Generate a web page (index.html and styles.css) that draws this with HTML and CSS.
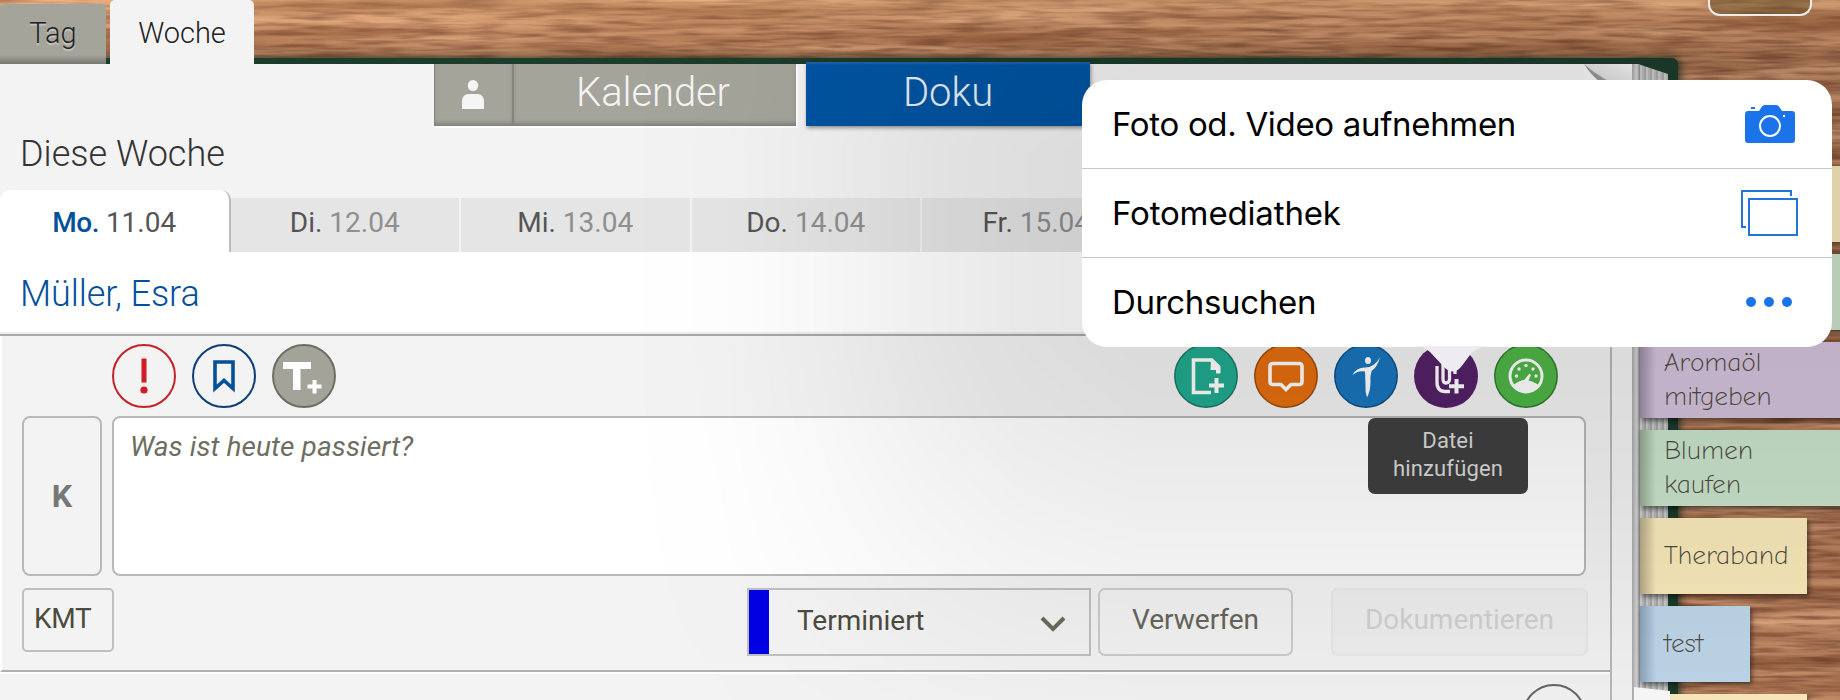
FILE: index.html
```html
<!DOCTYPE html>
<html lang="de">
<head>
<meta charset="utf-8">
<title>Doku – Diese Woche</title>
<link rel="stylesheet" href="styles.css">
</head>
<body>
<div class="desk">
  <svg class="wood" width="1840" height="700" aria-hidden="true">
    <defs>
      <filter id="grain" x="0" y="0" width="100%" height="100%" color-interpolation-filters="sRGB">
        <feTurbulence type="fractalNoise" baseFrequency="0.0035 0.07" numOctaves="3" seed="11"/>
        <feColorMatrix values="0.5 0 0 0 0.51  0.5 0 0 0 0.29  0.45 0 0 0 0.17  0 0 0 0 1"/>
      </filter>
      <filter id="fibre" x="0" y="0" width="100%" height="100%" color-interpolation-filters="sRGB">
        <feTurbulence type="fractalNoise" baseFrequency="0.02 0.25" numOctaves="2" seed="4"/>
        <feColorMatrix values="0 0 0 0 0.35  0 0 0 0 0.18  0 0 0 0 0.12  1.3 0 0 0 -0.52"/>
      </filter>
      <linearGradient id="shade" x1="0" y1="0" x2="0" y2="1">
        <stop offset="0" stop-color="#ffc88a" stop-opacity=".3"/>
        <stop offset=".035" stop-color="#d99a60" stop-opacity=".15"/>
        <stop offset=".08" stop-color="#5a2e18" stop-opacity=".18"/>
        <stop offset="1" stop-color="#5a2e18" stop-opacity=".08"/>
      </linearGradient>
    </defs>
    <rect width="1840" height="700" filter="url(#grain)"/>
    <rect width="1840" height="700" filter="url(#fibre)"/>
    <rect width="1840" height="700" fill="url(#shade)"/>
  </svg>

  <nav class="modes">
    <a class="mode">Tag</a>
    <a class="mode mode-on">Woche</a>
    <span class="ghost-button"></span>
  </nav>

  <div class="book">
    <main class="page">
      <div class="views">
        <div class="view view-person">
          <svg width="24" height="30" viewBox="0 0 24 30"><ellipse cx="12" cy="5.5" rx="5.2" ry="5.5"/><path d="M1 29V22Q1 14 8 14H16Q23 14 23 22V29Z"/></svg>
        </div>
        <div class="view view-calendar">Kalender</div>
        <div class="view view-doku">Doku</div>
      </div>
      <h1 class="week">Diese Woche</h1>
      <div class="days">
        <div class="day day-on"><b>Mo.</b> 11.04</div>
        <div class="day"><b>Di.</b> 12.04</div>
        <div class="day"><b>Mi.</b> 13.04</div>
        <div class="day"><b>Do.</b> 14.04</div>
        <div class="day"><b>Fr.</b> 15.04</div>
        <div class="day"></div>
        <div class="day"></div>
      </div>
      <h2 class="client">Müller, Esra</h2>
      <section class="editor">
        <div class="tools">
          <svg class="tool" viewBox="0 0 64 64"><circle cx="32" cy="32" r="31" fill="none" stroke="#c8202b" stroke-width="2"/><path d="M29.5 14.500H34.500V38.500H29.500Z" fill="#d41a24"/><circle cx="32" cy="46" r="3.600" fill="#d41a24"/></svg>
          <svg class="tool" viewBox="0 0 64 64"><circle cx="32" cy="32" r="31" fill="none" stroke="#0c3f78" stroke-width="2"/><path d="M23 18H41V44.500L32 36.500L23 44.500Z" fill="none" stroke="#04509c" stroke-width="3.600"/></svg>
          <svg class="tool" viewBox="0 0 64 64"><circle cx="32" cy="32" r="31" fill="#a3a39a" stroke="#6e6e64" stroke-width="2"/><path d="M11 18H39V25H28.500V46H21V25H11ZM40.500 36H44.500V40.500H49.500V44.500H44.500V49.500H40.500V44.500H35.500V40.500H40.500Z" fill="#fff"/></svg>
          <span class="spacer"></span>
          <svg class="tool" viewBox="0 0 64 64"><circle cx="32" cy="32" r="31.200" fill="#22ab90" stroke="#1c7766" stroke-width="1.500"/><path d="M37 48.500H19.500V16H37L44.500 23.500V29" fill="none" stroke="#fff" stroke-width="3.600"/><path d="M37 14.200H38.500L46.300 22V29.500H42V26H36.500Z" fill="#fff"/><path d="M42.500 34V49M35 41.500H50" fill="none" stroke="#fff" stroke-width="4"/></svg>
          <svg class="tool" viewBox="0 0 64 64"><circle cx="32" cy="32" r="31.200" fill="#e66f10" stroke="#9d4c0c" stroke-width="1.500"/><path d="M19 19.500H45Q48 19.500 48 22.500V37.500Q48 40.500 45 40.500H37L32 45.500L27 40.500H19Q16 40.500 16 37.500V22.500Q16 19.500 19 19.500Z" fill="none" stroke="#fff" stroke-width="3.600"/></svg>
          <svg class="tool" viewBox="0 0 64 64"><circle cx="32" cy="32" r="31.200" fill="#1976bd" stroke="#104f82" stroke-width="1.500"/><ellipse cx="34" cy="16.500" rx="3" ry="3.500" fill="#fff"/><path d="M46 13.500Q43 23.500 38 26.500Q36 31 36.500 38Q36.500 47 33 53.500Q31 48 31.500 41L31 27.500Q24 26 18.500 31Q22 23.500 31 23.500Q40 23.500 46 13.500Z" fill="#fff"/></svg>
          <svg class="tool" viewBox="0 0 64 64"><circle cx="32" cy="32" r="32" fill="#552268"/><path d="M23 22V38Q23 47.500 31 47.500H36M29 17V35Q29 39 32 39Q35.500 39 35.500 35V20M41 23V30" fill="none" stroke="#fff" stroke-width="3.300"/><path d="M42.500 35V49.500M35 42.200H50" fill="none" stroke="#fff" stroke-width="4"/></svg>
          <svg class="tool" viewBox="0 0 64 64"><circle cx="32" cy="32" r="31.200" fill="#4fb647" stroke="#2f7c30" stroke-width="1.500"/><circle cx="32" cy="32" r="16" fill="none" stroke="#fff" stroke-width="3"/><path d="M18 42Q25 36.500 30 36L35.500 29.500L37 31L34.500 36.500Q40 37.500 46 42L39 48H25Z" fill="#fff"/><g fill="#fff"><circle cx="22.500" cy="32" r="1.700"/><circle cx="25" cy="25" r="1.700"/><circle cx="32" cy="21.500" r="1.700"/><circle cx="39" cy="25" r="1.700"/><circle cx="42" cy="32" r="1.700"/></g></svg>
        </div>
        <div class="entry">
          <div class="kind">K</div>
          <div class="textarea">Was ist heute passiert?</div>
        </div>
        <div class="actions">
          <div class="tag">KMT</div>
          <span class="spacer"></span>
          <div class="status"><span>Terminiert</span>
            <svg width="26" height="18" viewBox="0 0 26 18"><path d="M2 3L13 14L24 3" fill="none" stroke="#6a6a5e" stroke-width="4"/></svg>
          </div>
          <div class="button discard">Verwerfen</div>
          <div class="button submit">Dokumentieren</div>
        </div>
      </section>
      <section class="next">
        <span class="ring"></span>
      </section>
    </main>
    <div class="gutter"><svg class="fold" width="64" height="18" viewBox="0 0 64 18"><defs><linearGradient id="curl" x1="0" y1="1" x2="1" y2="0"><stop offset="0" stop-color="#aaa"/><stop offset=".3" stop-color="#ddd"/><stop offset="1" stop-color="#f8f8f8"/></linearGradient></defs><path d="M8 0H56V18H24Z" fill="url(#curl)"/><path d="M8 0V18H24Z" fill="#f8f8f8"/><path d="M8 0Q18 9 34 18H24Q14 10 8 0Z" fill="#999"/></svg></div>
    <div class="edges"></div>
    <div class="cover"></div>
    <aside class="notes">
      <div class="note yellow wide"></div>
      <div class="note green wide"></div>
      <div class="note purple wide">Aromaöl<br>mitgeben</div>
      <div class="note green wide">Blumen<br>kaufen</div>
      <div class="note yellow">Theraband</div>
      <div class="note blue small">test</div>
      <div class="note yellow"></div>
    </aside>
    <svg class="sheet-corner" width="36" height="13" viewBox="0 0 36 13"><path d="M0 0L36 4V13H0Z" fill="#fafafa"/></svg>
  </div>

  <div class="halo"></div>

  <div class="tooltip">Datei<br>hinzufügen</div>

  <div class="popover">
    <div class="option">
      <span class="label">Foto od. Video aufnehmen</span>
      <svg class="camera" width="50" height="38" viewBox="0 0 50 38"><path d="M3 6H14L17 1.500Q18 0 20 0H31Q33 0 34 1.500L37 6H47Q50 6 50 9V35Q50 38 47 38H3Q0 38 0 35V9Q0 6 3 6Z" fill="#1a73e8"/><path d="M6 2H10V4H6Z" fill="#1a73e8"/><circle cx="25" cy="21" r="10" fill="none" stroke="#fff" stroke-width="2"/><circle cx="39" cy="11" r="1.200" fill="#fff"/></svg>
    </div>
    <div class="option">
      <span class="label label-library">Fotomediathek</span>
      <svg class="library" width="58" height="46" viewBox="0 0 58 46"><path d="M6 37H2V1H51V6" fill="none" stroke="#2274dc" stroke-width="2"/><rect x="9" y="9" width="48" height="36" fill="none" stroke="#2274dc" stroke-width="2"/></svg>
    </div>
    <div class="option">
      <span class="label">Durchsuchen</span>
      <svg class="dots" width="46" height="10" viewBox="0 0 46 10" fill="#1a73e8"><circle cx="5" cy="5" r="5"/><circle cx="23" cy="5" r="5"/><circle cx="41" cy="5" r="5"/></svg>
    </div>
    <svg class="beak" width="80" height="27" viewBox="0 0 80 27"><path d="M0 0Q10 0 16 6L30 21Q39 30 47 21L56 9Q62 0 78 0Z" fill="#eeecf1"/></svg>
  </div>
</div>
</body>
</html>
```
FILE: styles.css
```css
* { box-sizing: border-box; }
body {
  margin: 0;
  font-family: Roboto, "Liberation Sans", sans-serif;
}
.desk {
  position: relative;
  width: 1840px;
  height: 700px;
  overflow: hidden;
  background: #b9835a;
}
.wood { position: absolute; inset: 0; }

/* Day / week switch */
.modes {
  position: relative;
  z-index: 2;
  display: flex;
  align-items: flex-end;
  height: 64px;
}
.mode {
  width: 106px;
  height: 60px;
  margin-right: 4px;
  border-radius: 5px 5px 0 0;
  background: linear-gradient(#a4a49b 85%, #77776f);
  color: #222;
  font-size: 29px;
  font-weight: 300;
  line-height: 58px;
  text-align: center;
  text-shadow: 0 2px 1px rgba(255, 255, 255, .4);
}
.mode-on {
  width: 144px;
  height: 64px;
  line-height: 66px;
  background: #f3f3f3;
}
.ghost-button {
  align-self: flex-start;
  width: 104px;
  height: 16px;
  margin-left: 1450px;
  border: 2px solid #fff;
  border-top: 0;
  border-radius: 0 0 12px 12px;
  background: rgba(90, 70, 30, .45);
}

/* Book */
.book {
  position: relative;
  display: flex;
  height: 636px;
  width: 1840px;
}
.book::before {
  content: "";
  position: absolute;
  left: 0;
  top: -6px;
  width: 1678px;
  height: 660px;
  border-radius: 0 6px 0 0;
  background: #1c3c2c;
  box-shadow: 2px 0 8px rgba(10, 40, 25, .8);
}
.page, .gutter, .edges, .cover, .notes { position: relative; flex: none; }
.page {
  width: 1612px;
  background: #f3f3f3;
  border-right: 2px solid #b9b9b9;
}
.gutter { width: 20px; background: #f3f3f3; }
.fold { position: absolute; left: -36px; top: 0; }
.edges {
  width: 36px;
  background: repeating-linear-gradient(90deg, #aaa 0 2px, #ccc 2px 4px, #bbb 4px 6px);
  clip-path: polygon(0 0, 6px 0, 36px 10px, 36px 100%, 0 100%);
}
.edges::before { content: ""; position: absolute; inset: 0 auto 0 0; width: 8px; background: linear-gradient(90deg, #aaa, #d6d6d6 60%, #888); }
.cover { width: 12px; }

.views { display: flex; height: 62px; padding-left: 434px; }
.view {
  height: 62px;
  color: #f4f4f4;
  background: #a4a49b;
  font-size: 40px;
  font-weight: 300;
  line-height: 58px;
  text-align: center;
  box-shadow: inset 0 -4px 5px -2px #777, 2px 2px 0 #fff;
}
.view-person { width: 80px; padding: 16px 2px 0 0; line-height: 0; border-right: 2px solid #85857e; border-left: 1px solid #85857e; }
.view-person svg { fill: #f5f5f5; }
.view-calendar { width: 282px; padding-right: 4px; letter-spacing: -.1px; }
.view-doku {
  width: 284px;
  height: 64px;
  margin: -2px 0 0 10px;
  line-height: 62px;
  color: #e6eef8;
  background: #0054a2;
  box-shadow: 1px 2px 4px rgba(0, 0, 0, .4), inset 0 2px 2px #2264a6;
}
.week {
  height: 64px;
  margin: 0;
  padding-left: 20px;
  color: #333;
  font-size: 36px;
  font-weight: 300;
  line-height: 57px;
}
.days { display: flex; align-items: flex-end; height: 62px; overflow: hidden; }
.day {
  flex: none;
  width: 230.5px;
  height: 54px;
  border-right: 2px solid #f3f3f3;
  background: #e5e5e5;
  color: #8f8f8f;
  font-size: 28px;
  line-height: 50px;
  text-align: center;
}
.day b { color: #555; font-weight: 400; }
.day-on {
  height: 62px;
  padding-top: 8px;
  border-right-color: #bbb;
  border-radius: 10px 10px 0 0;
  background: #fff;
  color: #555;
}
.day-on b { color: #04509c; font-weight: 500; letter-spacing: -.5px; }
.client {
  height: 84px;
  margin: 0;
  padding-left: 20px;
  border-bottom: 2px solid #a8a8a8;
  background: linear-gradient(#fff 80px, #eee 80px);
  color: #04509c;
  font-size: 36px;
  font-weight: 300;
  line-height: 84px;
  letter-spacing: -.1px;
}

/* Editor */
.editor {
  height: 336px;
  padding: 8px 24px 0 20px;
  border-left: 2px solid #fff;
  border-bottom: 2px solid #b0b0b0;
}
.tools { display: flex; gap: 16px; height: 72px; padding: 0 28px 0 90px; }
.tool { width: 64px; height: 64px; flex: none; }
.spacer { flex: 1; }
.entry { display: flex; gap: 10px; height: 160px; }
.kind {
  flex: none;
  width: 80px;
  border: 2px solid #b8b8b8;
  border-radius: 8px;
  color: #777;
  font-size: 32px;
  font-weight: 700;
  line-height: 157px;
  text-align: center;
}
.textarea {
  flex: none;
  width: 1474px;
  padding: 12px 16px;
  border: 2px solid #b8b8b8;
  border-radius: 8px;
  background: #fff;
  color: #6e6e62;
  font-size: 28px;
  font-style: italic;
  line-height: 34px;
  letter-spacing: .1px;
}
.actions { display: flex; height: 68px; margin: 12px 0 0; }
.tag {
  width: 92px;
  height: 64px;
  padding-left: 10px;
  border: 2px solid #bfbfbf;
  border-radius: 5px;
  color: #4b4b3e;
  font-size: 28px;
  letter-spacing: -.3px;
  line-height: 57px;
}
.status {
  display: flex;
  align-items: center;
  justify-content: space-between;
  width: 344px;
  padding: 0 23px 4px 28px;
  border: 2px solid #c0c0c0;
  box-shadow: inset 20px 0 #0000e4;
  color: #4b4b3e;
  font-size: 28px;
}
.status span { margin-left: 20px; }
.status svg { margin-top: 8px; }
.button {
  border: 2px solid #ccc;
  border-radius: 7px;
  color: #66665a;
  font-size: 28px;
  line-height: 60px;
  text-align: center;
}
.discard { width: 195px; margin-left: 7px; }
.submit { width: 257px; margin: 0 -2px 0 38px; border-color: #e9e9e9; color: #d2d2d2; background: #efefef; }
.next { display: flex; justify-content: flex-end; height: 28px; padding: 10px 24px 0; border-top: 2px solid #fff; overflow: hidden; }
.ring { flex: none; width: 64px; height: 64px; border: 2px solid #666; border-radius: 50%; }

/* Sticky notes */
.notes {
  display: flex;
  flex-direction: column;
  gap: 12px;
  width: 200px;
  margin-left: -40px;
  padding-top: 102px;
}
.note {
  display: flex;
  flex: none;
  align-items: center;
  width: 167px;
  height: 76px;
  padding-left: 24px;
  color: #4c4a3c;
  font-family: "Comic Neue", "Open Sans", sans-serif;
  font-size: 27px;
  font-weight: 300;
  line-height: 34px;
  letter-spacing: -.2px;
  box-shadow: 2px 3px 5px rgba(0, 0, 0, .5);
}
.wide { width: 210px; }
.small { width: 110px; }
.yellow { background: linear-gradient(90deg, #b5a985, #faeabc 16px); }
.green { background: linear-gradient(90deg, #93ab94, #cbe4cc 16px); }
.purple { background: linear-gradient(90deg, #9c8ea6, #d5c4de 16px); }
.blue { background: linear-gradient(90deg, #8ba3b8, #bfd6ea 16px); }
.sheet-corner { position: absolute; left: 1634px; bottom: 0; }

.tooltip {
  position: absolute;
  z-index: 5;
  left: 1368px;
  top: 418px;
  width: 160px;
  height: 76px;
  padding-top: 9px;
  border-radius: 7px;
  background: #3a3a3a;
  color: #c8c8c8;
  font-size: 22px;
  line-height: 28px;
  letter-spacing: .15px;
  text-align: center;
}

/* Attachment menu, with the wide soft shade around it */
.halo {
  position: absolute;
  z-index: 3;
  inset: 0 0 0 620px;
  background: rgba(0, 0, 0, .1);
  -webkit-mask-image:
    linear-gradient(90deg, transparent, rgba(0, 0, 0, .08) 100px, rgba(0, 0, 0, .3) 200px, rgba(0, 0, 0, .6) 300px, rgba(0, 0, 0, .85) 400px, #000 520px),
    linear-gradient(rgba(0, 0, 0, .7), #000 150px, #000 330px, rgba(0, 0, 0, .85) 430px, rgba(0, 0, 0, .5) 570px, rgba(0, 0, 0, .17) 700px);
  -webkit-mask-composite: source-in;
  mask-composite: intersect;
}
.popover {
  position: absolute;
  z-index: 4;
  left: 1082px;
  top: 80px;
  width: 750px;
  height: 267px;
  border-radius: 25px;
  background: #fff;
}
.option {
  display: flex;
  align-items: center;
  justify-content: space-between;
  height: 89px;
  padding: 0 38px 0 30px;
  border-bottom: 1px solid #c6c6c8;
}
.option:last-of-type { border-bottom: 0; padding-bottom: 2px; }
.label { color: #000; font-family: Inter, "Liberation Sans", sans-serif; font-size: 33px; letter-spacing: -.32px; }
.label-library { letter-spacing: -.15px; }
.camera { margin-right: -1px; }
.library { margin-right: -4px; }
.dots { margin-right: 2px; }
.beak { position: absolute; left: 332px; top: 266px; }
```
